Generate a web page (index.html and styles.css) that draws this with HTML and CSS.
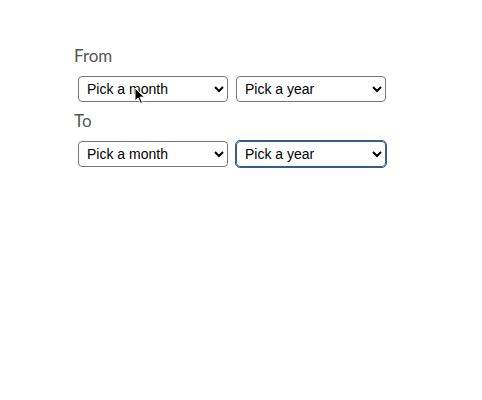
FILE: index.html
```html
<!DOCTYPE html>
<html lang="en">
<head>
	<meta charset="UTF-8">
	<title>Date range</title>
	<link rel="stylesheet" href="styles.css">
</head>
<body>

<div class="range">
	<label class="range-label">From</label>
	<div class="range-row">
		<select class="picker">
			<option>Pick a month</option>
		</select>
		<select class="picker">
			<option>Pick a year</option>
		</select>
	</div>
	<label class="range-label">To</label>
	<div class="range-row">
		<select class="picker">
			<option>Pick a month</option>
		</select>
		<select class="picker focused">
			<option>Pick a year</option>
		</select>
	</div>
	<!-- mouse pointer from the capture -->
	<svg class="cursor" width="12" height="18" viewBox="0 0 12 18">
		<path d="M1 1 L1 14 L4 11 L6.5 16.5 L8.5 15.6 L6 10.2 L10.5 10.2 Z" fill="#000" stroke="#fff" stroke-width="1"/>
	</svg>
</div>

</body>
</html>
```

FILE: styles.css
```css
:root {
	--color-label: #555;
	--color-border: #767676;
	--color-focus: #3a5b80;
	font-family: Lato, "Liberation Sans", sans-serif;
}
body {
	margin: 0;
	background: #fff;
}
.range {
	position: relative;
	width: 320px;
	padding: 46px 0 0 74px;
}
.range-label {
	display: block;
	font-size: 17px;
	font-weight: 400;
	line-height: 20px;
	color: var(--color-label);
}
.range-row {
	display: flex;
	gap: 8px;
	margin: 10px 0 9px 4px;
}
.picker {
	width: 150px;
	height: 26px;
	padding: 0 4px;
	font-family: "Liberation Sans", Arial, sans-serif;
	font-size: 14px;
	color: #000;
	background: #fff;
	border: 1px solid var(--color-border);
	border-radius: 4px;
}
.picker.focused {
	border-color: var(--color-focus);
	outline: 1px solid var(--color-focus);
}
.cursor {
	position: absolute;
	left: 134px;
	top: 87px;
}
```
